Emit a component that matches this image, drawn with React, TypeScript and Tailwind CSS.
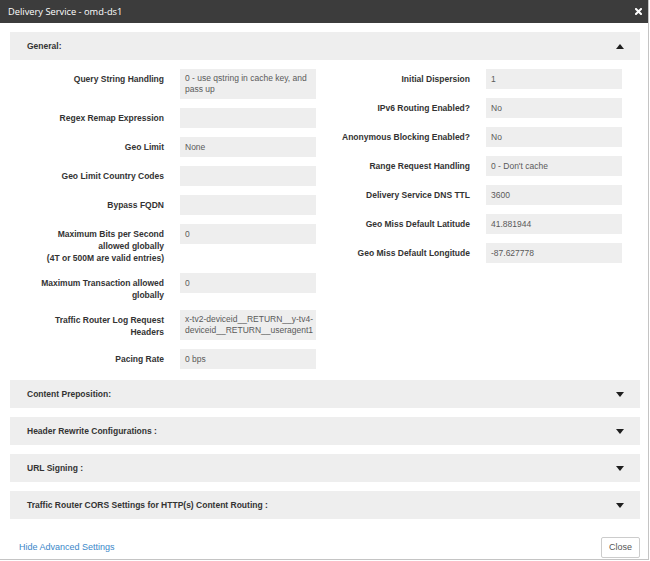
import React from 'react';

interface Field {
  label: React.ReactNode;
  value: React.ReactNode;
  tall?: boolean;
}

const leftFields: Field[] = [
  { label: 'Query String Handling', value: <>0 - use qstring in cache key, and<br />pass up</>, tall: true },
  { label: 'Regex Remap Expression', value: '' },
  { label: 'Geo Limit', value: 'None' },
  { label: 'Geo Limit Country Codes', value: '' },
  { label: 'Bypass FQDN', value: '' },
  {
    label: <>Maximum Bits per Second<br />allowed globally<br />(4T or 500M are valid entries)</>,
    value: '0',
  },
  { label: <>Maximum Transaction allowed<br />globally</>, value: '0' },
  {
    label: <>Traffic Router Log Request<br />Headers</>,
    value: <>x-tv2-deviceid__RETURN__y-tv4-<br />deviceid__RETURN__useragent1</>,
    tall: true,
  },
  { label: 'Pacing Rate', value: '0 bps' },
];

const rightFields: Field[] = [
  { label: 'Initial Dispersion', value: '1' },
  { label: 'IPv6 Routing Enabled?', value: 'No' },
  { label: 'Anonymous Blocking Enabled?', value: 'No' },
  { label: 'Range Request Handling', value: "0 - Don't cache" },
  { label: 'Delivery Service DNS TTL', value: '3600' },
  { label: 'Geo Miss Default Latitude', value: '41.881944' },
  { label: 'Geo Miss Default Longitude', value: '-87.627778' },
];

const collapsed = [
  'Content Preposition:',
  'Header Rewrite Configurations :',
  'URL Signing :',
  'Traffic Router CORS Settings for HTTP(s) Content Routing :',
];

const Caret: React.FC<{ up?: boolean }> = ({ up }) => (
  <svg width="8" height="5" viewBox="0 0 8 5" className="mr-[16px]">
    {up ? <polygon points="0,5 8,5 4,0" fill="#1e1e1e" /> : <polygon points="0,0 8,0 4,5" fill="#1e1e1e" />}
  </svg>
);

const PanelHeader: React.FC<{ title: string; open?: boolean }> = ({ title, open }) => (
  <div className="h-[28px] bg-[#eeeeee] flex items-center justify-between pl-[17px]">
    <span className="text-[8.5px] font-bold text-[#333333]">{title}</span>
    <Caret up={open} />
  </div>
);

const FieldRow: React.FC<{ field: Field }> = ({ field }) => (
  <div className="flex items-start gap-[16px]">
    <div className="w-[154px] shrink-0 text-right pt-[4px] text-[8.5px] leading-[12px] font-bold text-[#333333] whitespace-nowrap">
      {field.label}
    </div>
    <div
      className={`w-[136px] bg-[#eeeeee] pl-[5px] text-[8.5px] text-[#5a5a5a] whitespace-nowrap ${
        field.tall ? 'h-[30px] pt-[4px] leading-[11px]' : 'h-[20px] leading-[20px]'
      }`}
    >
      {field.value}
    </div>
  </div>
);

export default function App() {
  return (
    <div className="w-[650px] h-[561px] bg-white font-['Liberation_Sans',Arial,sans-serif]">
      <div className="w-[649px] h-[560px] border-r border-b border-[#c4c4c4] flex flex-col">
        <div className="h-[23px] shrink-0 bg-[#3c3c3c] flex items-center justify-between pl-[8px] pr-[6px]">
          <span className="font-['Open_Sans',sans-serif] text-[9.3px] text-white">Delivery Service - omd-ds1</span>
          <svg width="7" height="7" viewBox="0 0 7 7">
            <path d="M1 1 L6 6 M6 1 L1 6" stroke="#ffffff" strokeWidth="2" strokeLinecap="square" />
          </svg>
        </div>

        <div className="pl-[10px] pr-[8px] pt-[9px] flex flex-col">
          <PanelHeader title="General:" open />

          <div className="flex pt-[9px] pb-[11px]">
            <div className="w-[306px] flex flex-col gap-[9px]">
              {leftFields.map((f, i) => (
                <FieldRow key={i} field={f} />
              ))}
            </div>
            <div className="w-[306px] flex flex-col gap-[9px]">
              {rightFields.map((f, i) => (
                <FieldRow key={i} field={f} />
              ))}
            </div>
          </div>

          <div className="flex flex-col gap-[9px]">
            {collapsed.map((t) => (
              <PanelHeader key={t} title={t} />
            ))}
          </div>
        </div>

        <div className="mt-[18px] pl-[19px] pr-[8px] flex items-center justify-between">
          <a href="#" className="text-[9px] text-[#3a87c9]">Hide Advanced Settings</a>
          <button className="h-[21px] w-[39px] bg-white border border-[#cccccc] rounded-[2px] text-[9px] text-[#555555]">
            Close
          </button>
        </div>
      </div>
    </div>
  );
}
